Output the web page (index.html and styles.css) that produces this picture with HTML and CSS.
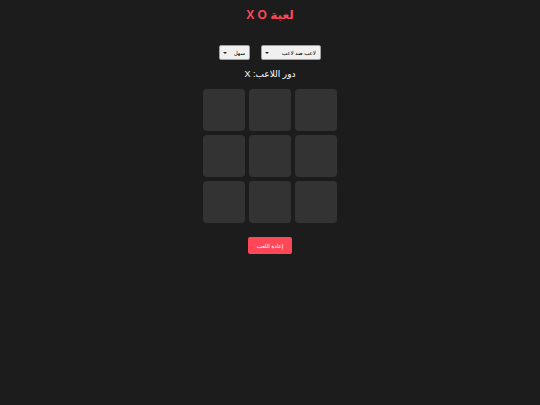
FILE: index.html
```html
<!DOCTYPE html>
<html lang="ar" dir="rtl">
<head>
<meta charset="utf-8">
<link rel="stylesheet" href="styles.css">
</head>
<body>
<div class="app">
  <h1 class="title">لعبة X O</h1>
  <div class="controls">
    <span class="selwrap"><select class="sel sel-mode"><option>لاعب ضد لاعب</option></select></span>
    <span class="selwrap"><select class="sel sel-level"><option>سهل</option></select></span>
  </div>
  <div class="status">دور اللاعب: X</div>
  <div class="board">
    <div class="cell"></div><div class="cell"></div><div class="cell"></div>
    <div class="cell"></div><div class="cell"></div><div class="cell"></div>
    <div class="cell"></div><div class="cell"></div><div class="cell"></div>
  </div>
  <button class="reset">إعادة اللعب</button>
</div>
</body>
</html>
```
FILE: styles.css
```css
html, body {
  margin: 0;
  padding: 0;
  background: #1c1c1c;
  height: 100%;
}
body {
  font-family: "Liberation Sans", "DejaVu Sans", sans-serif;
  color: #ffffff;
}
.app {
  display: flex;
  flex-direction: column;
  align-items: center;
  padding-top: 8px;
}
.title {
  margin: 0;
  font-size: 12px;
  font-weight: bold;
  color: #ff4757;
  line-height: 15px;
}
.controls {
  display: flex;
  gap: 11px;
  margin-top: 22px;
}
.selwrap {
  position: relative;
  display: block;
}
.selwrap::after {
  content: "";
  position: absolute;
  left: 4px;
  top: 6.5px;
  width: 0;
  height: 0;
  border-left: 2px solid transparent;
  border-right: 2px solid transparent;
  border-top: 2.5px solid #222;
  pointer-events: none;
}
.sel {
  display: block;
  appearance: none;
  -webkit-appearance: none;
  font-family: "Liberation Sans", "DejaVu Sans", sans-serif;
  font-size: 5.5px;
  height: 15px;
  padding: 0 4px 0 10px;
  background: #f0f0f0;
  color: #000;
  border: 1px solid #a0a0a0;
  border-radius: 2px;
}
.sel-mode { width: 60px; }
.sel-level { width: 31px; }
.status {
  margin-top: 8px;
  font-size: 9px;
  line-height: 12px;
  color: #fff;
}
.board {
  margin-top: 9px;
  display: grid;
  grid-template-columns: repeat(3, 42px);
  grid-template-rows: repeat(3, 42px);
  gap: 4px;
  direction: ltr;
}
.cell {
  background: #333333;
  border-radius: 4px;
}
.reset {
  margin-top: 14px;
  width: 44px;
  height: 17px;
  padding: 0;
  border: none;
  border-radius: 2px;
  background: #ff4757;
  color: #fff;
  font-family: "Liberation Sans", "DejaVu Sans", sans-serif;
  font-size: 5.5px;
}
```
